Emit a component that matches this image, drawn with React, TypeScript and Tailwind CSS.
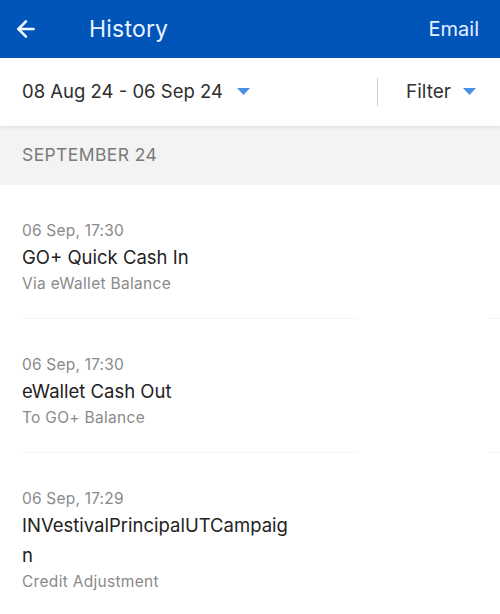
import { ArrowLeft } from "lucide-react";

const items = [
  { time: "06 Sep, 17:30", title: "GO+ Quick Cash In", sub: "Via eWallet Balance" },
  { time: "06 Sep, 17:30", title: "eWallet Cash Out", sub: "To GO+ Balance" },
  { time: "06 Sep, 17:29", title: "INVestivalPrincipalUTCampaign", sub: "Credit Adjustment" },
];

function Caret() {
  return (
    <svg width="13" height="8" viewBox="0 0 13 8" className="shrink-0">
      <path d="M0 0 H13 L6.5 7 Z" fill="#4a90e2" />
    </svg>
  );
}

export default function App() {
  return (
    <div className="w-[500px] h-[614px] overflow-hidden bg-white font-['Inter','Noto_Sans',sans-serif]">
      {/* Top bar */}
      <div className="h-[58px] bg-[#0155b9] flex items-center px-[13px] text-white">
        <ArrowLeft size={26} strokeWidth={2.4} className="text-[#f0f6ff]" />
        <div className="ml-[50px] text-[23px] tracking-[0.2px] text-[#eaf3ff]">History</div>
        <div className="ml-auto mr-[8px] text-[20px] text-[#e4efff]">Email</div>
      </div>

      {/* Date range / filter */}
      <div className="relative z-10 h-[68px] bg-white flex items-center pl-[22px] shadow-[0_2px_4px_rgba(0,0,0,0.08)]">
        <span className="text-[18.5px] text-[#2e2e2e]">08 Aug 24 - 06 Sep 24</span>
        <span className="ml-[14px]"><Caret /></span>
        <div className="ml-auto w-px h-[28px] bg-[#cfcfcf]" />
        <span className="ml-[28px] text-[19px] text-[#333]">Filter</span>
        <span className="ml-[12px] mr-[24px]"><Caret /></span>
      </div>

      {/* Section header */}
      <div className="h-[59px] bg-[#f3f3f3] flex items-center pl-[22px] text-[17.5px] tracking-[0.4px] text-[#7a7a7a]">
        SEPTEMBER 24
      </div>

      {/* Transactions */}
      <div className="flex flex-col">
        {items.map((it, i) => (
          <div key={i}>
            <div className="pl-[22px] pt-[35px] pb-[23px]">
              <div className="text-[15.5px] tracking-[0.2px] leading-[22px] text-[#8a8a8a]">{it.time}</div>
              <div className="w-[270px] break-all text-[18.5px] leading-[30px] text-[#222]">{it.title}</div>
              <div className="mt-px text-[15.5px] tracking-[0.3px] leading-[22px] text-[#8a8a8a]">{it.sub}</div>
            </div>
            <div className="flex">
              <div className="ml-[22px] w-[336px] h-px bg-[#f5f5f5]" />
              <div className="ml-auto w-[12px] h-px bg-[#f5f5f5]" />
            </div>
          </div>
        ))}
      </div>
    </div>
  );
}
